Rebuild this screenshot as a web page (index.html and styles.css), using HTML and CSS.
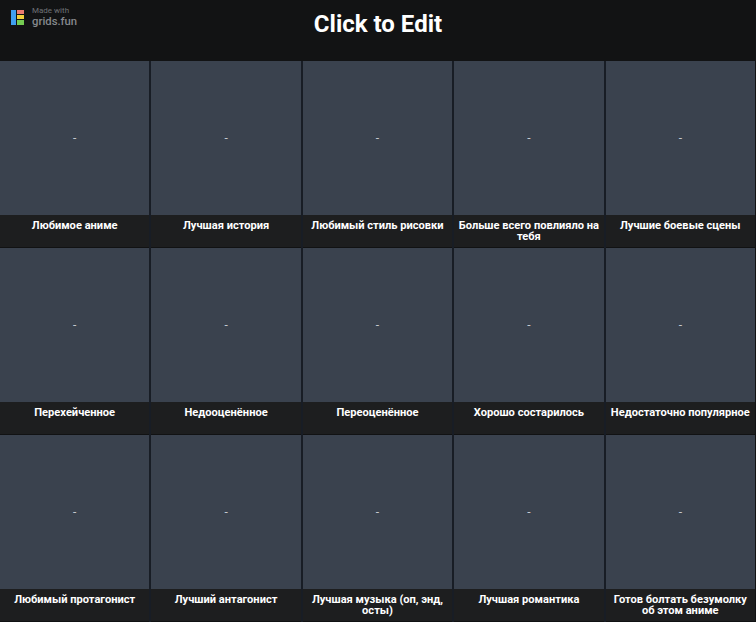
FILE: index.html

```html
<!doctype html>
<html>
<head>
  <title>Click to Edit</title>
  <meta charset="utf-8">
  <link rel="stylesheet" href="styles.css">
</head>
<body>
  <div class="header">
    <a class="badge" href="#">
      <svg class="logo" width="13" height="15" viewBox="0 0 13 15">
        <rect x="0" y="0" width="5" height="15" fill="#3f9ff0"/>
        <rect x="6" y="0" width="7" height="4" fill="#ec7a70"/>
        <rect x="6" y="5" width="7" height="4" fill="#f2cf3c"/>
        <rect x="6" y="10" width="7" height="5" fill="#74cc52"/>
      </svg>
      <span class="badge-text">
        <span class="made">Made with</span>
        <span class="site">grids.fun</span>
      </span>
    </a>
    <h1>Click to Edit</h1>
  </div>
  <div class="grid">
    <div class="cell"><div class="pic">-</div><div class="cap">Любимое аниме</div></div>
    <div class="cell"><div class="pic">-</div><div class="cap">Лучшая история</div></div>
    <div class="cell"><div class="pic">-</div><div class="cap">Любимый стиль рисовки</div></div>
    <div class="cell"><div class="pic">-</div><div class="cap">Больше всего повлияло на тебя</div></div>
    <div class="cell"><div class="pic">-</div><div class="cap">Лучшие боевые сцены</div></div>
    <div class="cell"><div class="pic">-</div><div class="cap">Перехейченное</div></div>
    <div class="cell"><div class="pic">-</div><div class="cap">Недооценённое</div></div>
    <div class="cell"><div class="pic">-</div><div class="cap">Переоценённое</div></div>
    <div class="cell"><div class="pic">-</div><div class="cap">Хорошо состарилось</div></div>
    <div class="cell"><div class="pic">-</div><div class="cap">Недостаточно популярное</div></div>
    <div class="cell"><div class="pic">-</div><div class="cap">Любимый протагонист</div></div>
    <div class="cell"><div class="pic">-</div><div class="cap">Лучший антагонист</div></div>
    <div class="cell"><div class="pic">-</div><div class="cap">Лучшая музыка (оп, энд, осты)</div></div>
    <div class="cell"><div class="pic">-</div><div class="cap">Лучшая романтика</div></div>
    <div class="cell"><div class="pic">-</div><div class="cap">Готов болтать безумолку об этом аниме</div></div>
  </div>
</body>
</html>
```

FILE: styles.css

```css
html, body {
  height: 100%;
}
body {
  margin: 0;
  background: #121314;
  font-family: Roboto, "Liberation Sans", sans-serif;
  overflow: hidden;
}
.header {
  position: relative;
  height: 61px;
  text-align: center;
}
h1 {
  margin: 0;
  padding-top: 9px;
  font-size: 24px;
  line-height: 30px;
  font-weight: 700;
  color: #fff;
}
.badge {
  position: absolute;
  left: 11px;
  top: 6px;
  display: flex;
  gap: 8px;
  align-items: center;
  color: #85888c;
  text-decoration: none;
}
.badge-text {
  display: flex;
  flex-direction: column;
  align-items: flex-start;
}
.made {
  font-size: 8px;
  line-height: 9px;
  color: #6f7276;
}
.site {
  font-size: 11.3px;
  line-height: 13px;
  font-weight: 500;
}
.grid {
  display: grid;
  grid-template-columns: repeat(5, 1fr);
  column-gap: 2px;
  margin-right: 1px;
  background: #181d25;
}
.cell {
  display: flex;
  flex-direction: column;
  height: 187px;
  background: #1d1e1f;
  border-bottom: 1px solid #111213;
  box-sizing: border-box;
}
.pic {
  height: 154px;
  flex-shrink: 0;
  background: #3a424e;
  color: #c4c8ce;
  font-size: 12px;
  display: flex;
  align-items: center;
  justify-content: center;
}
.cap {
  padding: 5px 4px 0;
  text-align: center;
  color: #fff;
  font-size: 11.1px;
  line-height: 11px;
  font-weight: 700;
}
```
